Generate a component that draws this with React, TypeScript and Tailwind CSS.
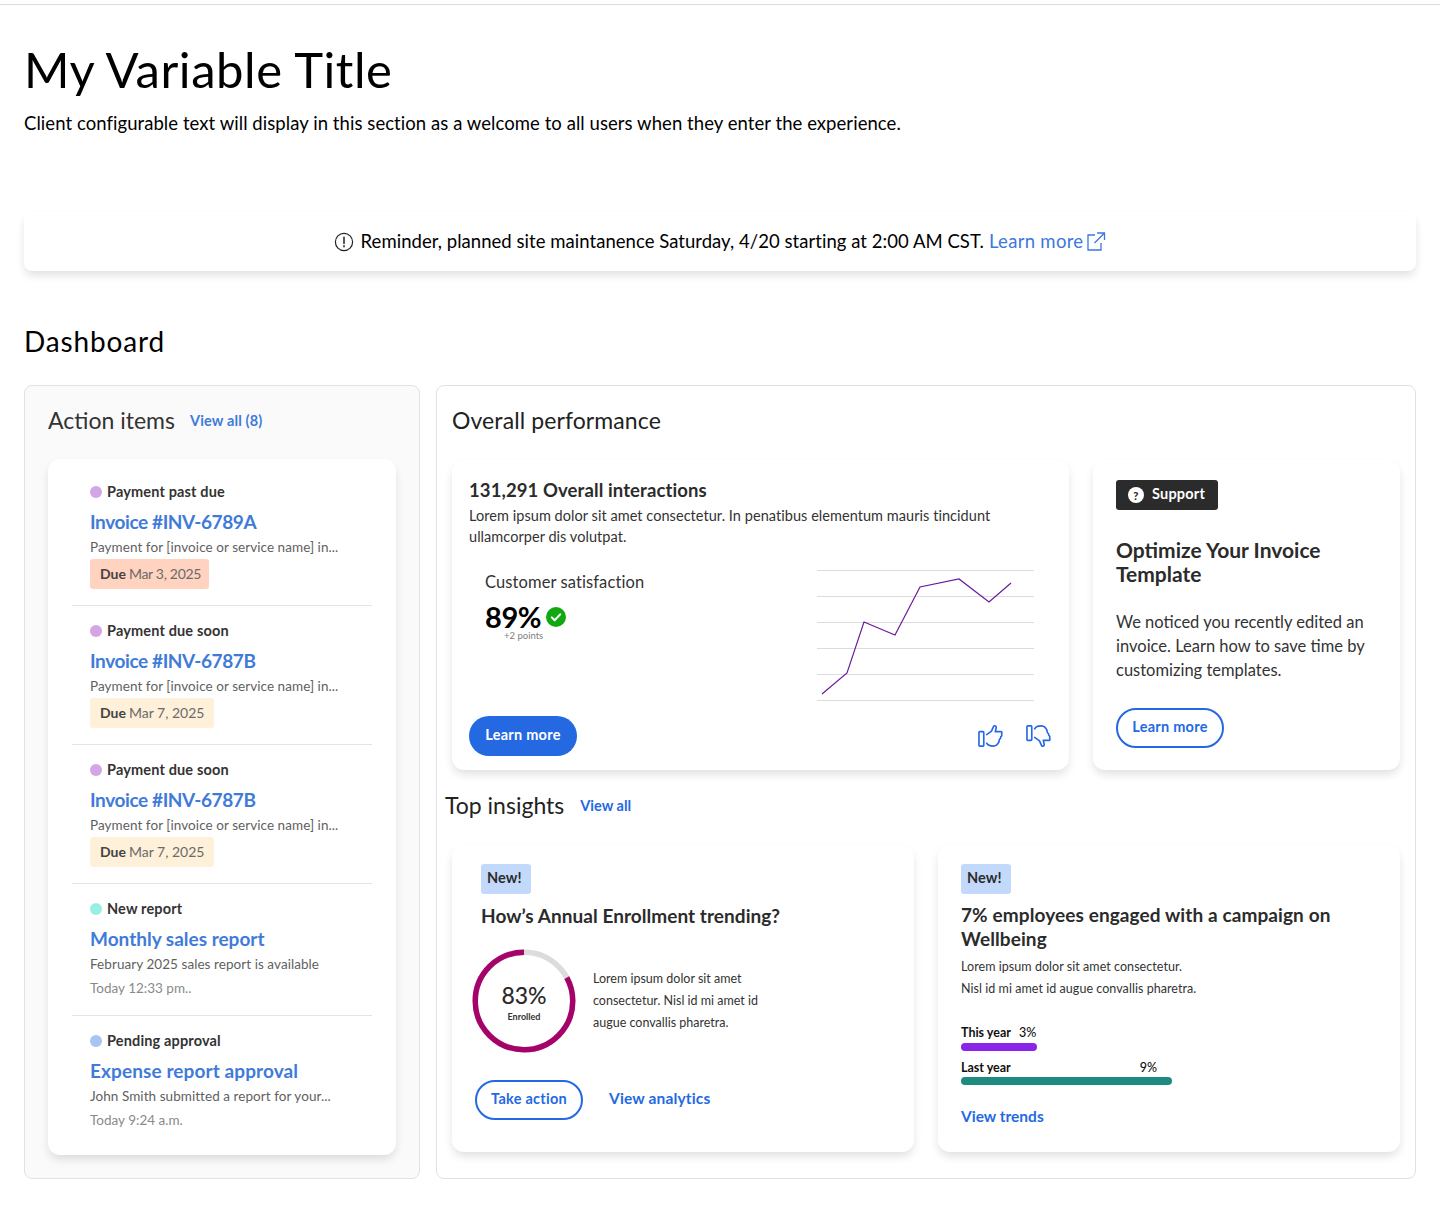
import React from "react";

const F = "font-['Lato','Noto_Sans',sans-serif]";

function Row({ dot, label, title, titleCls, desc, pill, date, last }: { dot: string; label: string; title: string; titleCls: string; desc: string; pill?: { bg: string; text: string; cls: string }; date?: string; last?: boolean }) {
  return (
    <div className={`mx-6 pt-[15px] pl-[18px] ${last ? "" : "border-b border-[#e4e4e4]"} ${pill ? "pb-4" : "pb-[17px]"}`}>
      <div className="flex h-5 items-center gap-[5px]">
        <span className={`h-3 w-3 rounded-full ${dot}`} />
        <span className="-mt-[1px] text-[14.5px] font-bold tracking-[0.15px] text-[#333]">{label}</span>
      </div>
      <div className={`mt-2 h-6 text-[19px] font-bold leading-6 text-[#3f7bd9] ${titleCls}`}>{title}</div>
      <div className="mt-[3px] h-5 text-[13.5px] leading-5 tracking-[0.06px] text-[#5f5f5f]">{desc}</div>
      {pill && (
        <div className={`mt-[2px] flex h-[30px] items-center rounded-[3px] pb-[2px] pl-[10px] text-[14px] text-[#6a6a6a] ${pill.bg} ${pill.cls}`}>
          <span className="mr-[3px] font-bold tracking-normal text-[#444]">Due</span>
          {pill.text}
        </div>
      )}
      {date && <div className="mt-1 h-5 text-[13.5px] leading-5 text-[#8a8a8a]">{date}</div>}
    </div>
  );
}

function Thumb({ down }: { down?: boolean }) {
  return (
    <svg width="25" height="24" viewBox="0 0 26 24" fill="none" stroke="#2469e2" strokeWidth="1.7" strokeLinejoin="round" strokeLinecap="round" className={down ? "rotate-180 -scale-x-100" : ""}>
      <rect x="1" y="7.5" width="5" height="15" rx="0.8" />
      <path d="M9 10.5 L14 7 L16.5 1.5 C17.5 1 19 1.8 19 3.2 L18 7.5 H24 C25 7.5 25.2 9 24.5 10 C25 11 24.6 12.4 23.6 12.8 C23.8 14 23.2 15 22.3 15.4 C22.3 17.5 20.5 22.5 16 22.5 C12.5 22.5 10 21.5 9 19.5" />
    </svg>
  );
}

function Outline({ children }: { children: React.ReactNode }) {
  return <div className="flex h-10 w-[108px] items-center justify-center rounded-full border-2 border-[#2469e2] pb-[2px] text-[14.5px] font-bold tracking-[0.25px] text-[#2469e2]">{children}</div>;
}

function New() {
  return <div className="flex h-[30px] w-[50px] items-center rounded-[3px] bg-[#c3d9fb] pb-[2px] pl-[6px] text-[14.5px] font-bold tracking-[0.1px] text-[#2b2b2b]">New!</div>;
}

const card = "rounded-xl bg-white shadow-[0_5px_10px_-1px_rgba(0,0,0,0.13)]";

export default function App() {
  return (
    <div className={`${F} min-h-[1231px] bg-white text-black`}>
      <div className="h-[5px] border-b border-[#dcdcdc]" />
      <div className="px-6">
        <h1 className="mt-[34px] h-[60px] text-[49px] font-normal leading-[60px] tracking-[0.55px]">My Variable Title</h1>
        <p className="mt-[10px] h-7 text-[18.5px] leading-7 tracking-[0.06px]">Client configurable text will display in this section as a welcome to all users when they enter the experience.</p>

        <div className="mt-[75px] flex h-[59px] items-center justify-center rounded-lg bg-white text-[18.5px] shadow-[0_5px_10px_-1px_rgba(0,0,0,0.13)]">
          <svg width="20" height="20" viewBox="0 0 20 20" fill="none" stroke="#222" strokeWidth="1.2" className="mr-[7px]">
            <circle cx="10" cy="10" r="8.6" />
            <path d="M10 5.2v6.4M10 13.8v1" strokeWidth="1.5" strokeLinecap="round" />
          </svg>
          <span className="tracking-[0.04px]">Reminder, planned site maintanence Saturday, 4/20 starting at 2:00 AM CST.</span>
          <span className="ml-[5px] tracking-[0.3px] text-[#3b78e0]">Learn more</span>
          <svg width="20" height="20" viewBox="0 0 20 20" fill="none" stroke="#3b78e0" strokeWidth="1.3" className="ml-[3px] -translate-y-[1px]">
            <path d="M9 4H2v15h13v-7M11 2h7.5v7M18.5 2 8.5 12" />
          </svg>
        </div>

        <h2 className="mt-[50px] h-10 text-[28px] font-normal leading-10 tracking-[0.85px]">Dashboard</h2>

        <div className="mt-[24px] flex h-[794px] gap-4">
          <section className="w-[396px] shrink-0 rounded-lg border border-[#e2e2e2] bg-[#fafafa] pl-[23px] pr-[23px]">
            <div className="mt-[19px] flex h-8 items-center gap-[15px]">
              <span className="-mt-[2px] text-[23px] text-[#333]">Action items</span>
              <span className="text-[14.5px] font-bold tracking-[0.15px] text-[#3f7bd9]">View all (8)</span>
            </div>
            <div className={`mt-[22px] h-[696px] ${card} pt-[8px]`}>
              <Row dot="bg-[#d3a5e6]" label="Payment past due" title="Invoice #INV-6789A" titleCls="tracking-[-0.4px]" desc="Payment for [invoice or service name] in..." pill={{ bg: "bg-[#ffd3bf]", text: "Mar 3, 2025", cls: "w-[119px] tracking-[-0.3px]" }} />
              <Row dot="bg-[#d3a5e6]" label="Payment due soon" title="Invoice #INV-6787B" titleCls="tracking-[-0.4px]" desc="Payment for [invoice or service name] in..." pill={{ bg: "bg-[#fff0da]", text: "Mar 7, 2025", cls: "w-[124px]" }} />
              <Row dot="bg-[#d3a5e6]" label="Payment due soon" title="Invoice #INV-6787B" titleCls="tracking-[-0.4px]" desc="Payment for [invoice or service name] in..." pill={{ bg: "bg-[#fff0da]", text: "Mar 7, 2025", cls: "w-[124px]" }} />
              <Row dot="bg-[#98f0e4]" label="New report" title="Monthly sales report" titleCls="" desc="February 2025 sales report is available" date="Today 12:33 pm.." />
              <Row dot="bg-[#a8c4f2]" label="Pending approval" title="Expense report approval" titleCls="tracking-[0.1px]" desc="John Smith submitted a report for your..." date="Today 9:24 a.m." last />
            </div>
          </section>

          <section className="flex-1 rounded-lg border border-[#e2e2e2] bg-white px-[15px]">
            <div className="mt-[19px] flex h-8 items-center pb-[2px] text-[23px] tracking-[0.1px] text-[#222]">Overall performance</div>

            <div className="mt-[23px] flex gap-6">
              <div className={`h-[310px] w-[617px] ${card} px-[17px] pt-5`}>
                <div className="h-5 text-[18.5px] font-bold leading-5 tracking-[0.1px] text-[#2b2b2b]">131,291 Overall interactions</div>
                <p className="mt-[5px] text-[14.5px] leading-[21px] tracking-[0.05px] text-[#333]">Lorem ipsum dolor sit amet consectetur. In penatibus elementum mauris tincidunt<br />ullamcorper dis volutpat.</p>
                <div className="mt-[23px] flex h-[131px] justify-between pr-[18px]">
                  <div className="pl-4 pt-[2px]">
                    <div className="h-5 text-[16.5px] leading-5 tracking-[0.1px] text-[#333]">Customer satisfaction</div>
                    <div className="mt-[11px] flex h-7 items-center gap-[5px]">
                      <span className="text-[29px] font-bold leading-7 tracking-[-0.4px]">89%</span>
                      <svg width="20" height="20" viewBox="0 0 20 20">
                        <circle cx="10" cy="10" r="10" fill="#12a812" />
                        <path d="M5.8 10.4l2.8 2.8 5.6-5.8" fill="none" stroke="#fff" strokeWidth="2" strokeLinecap="round" strokeLinejoin="round" />
                      </svg>
                    </div>
                    <div className="ml-[19px] h-[10px] text-[9.5px] leading-[10px] text-[#808080]">+2 points</div>
                  </div>
                  <svg width="217" height="131" viewBox="0 0 217 131" fill="none">
                    {[0.5, 26.5, 52.5, 78.5, 104.5, 130.5].map((y) => (
                      <line key={y} x1="0" x2="217" y1={y} y2={y} stroke="#dcdcdc" />
                    ))}
                    <polyline points="5,124 30,103 47,52 78,65 103,17 142,9 172,32 194,13" stroke="#6a1b9a" strokeWidth="1.2" />
                  </svg>
                </div>
                <div className="mt-[15px] flex items-center justify-between">
                  <div className="flex h-10 w-[108px] items-center justify-center rounded-full bg-[#2469e2] pb-[2px] text-[14.5px] font-bold tracking-[0.25px] text-white">Learn more</div>
                  <div className="mr-[1px] flex gap-[23px]">
                    <Thumb />
                    <Thumb down />
                  </div>
                </div>
              </div>

              <div className={`h-[310px] w-[307px] ${card} pl-[23px] pt-5`}>
                <div className="flex h-[30px] w-[102px] items-center gap-2 rounded-[3px] bg-[#2b2b2b] pb-[2px] pl-3 text-[14.5px] font-bold tracking-[0.2px] text-white">
                  <span className="mt-[2px] flex h-4 w-4 items-center justify-center rounded-full bg-white text-[11px] font-black leading-none text-[#2b2b2b]">?</span>
                  Support
                </div>
                <div className="mt-[28px] w-[260px] text-[21px] font-bold leading-6 text-[#2b2b2b]">Optimize Your Invoice Template</div>
                <p className="mt-[24px] w-[265px] text-[16.5px] leading-6 text-[#333]">We noticed you recently edited an invoice. Learn how to save time by customizing templates.</p>
                <div className="mt-[26px]"><Outline>Learn more</Outline></div>
              </div>
            </div>

            <div className="-ml-[7px] mt-5 flex h-8 items-center gap-4">
              <span className="-mt-[2px] text-[23px] text-[#222]">Top insights</span>
              <span className="text-[14.5px] font-bold text-[#2469e2]">View all</span>
            </div>

            <div className="mt-[23px] flex gap-6">
              <div className={`h-[307px] w-[462px] ${card} pl-[23px] pt-[19px]`}>
                <div className="ml-[6px]"><New /></div>
                <div className="ml-[6px] mt-[10px] h-6 text-[19px] font-bold leading-6 tracking-[0.05px] text-[#2b2b2b]">How’s Annual Enrollment trending?</div>
                <div className="-ml-[3px] mt-[21px] flex items-center">
                  <div className="relative h-[104px] w-[104px]">
                    <svg width="104" height="104" viewBox="0 0 104 104" fill="none" className="-rotate-90">
                      <circle cx="52" cy="52" r="48.75" stroke="#dcdcdc" strokeWidth="5.5" />
                      <circle cx="52" cy="52" r="48.75" stroke="#a6036a" strokeWidth="5.5" strokeDasharray="254.2 306.3" strokeDashoffset="-52.1" />
                    </svg>
                    <div className="absolute inset-0 flex flex-col items-center justify-center pt-[3px]">
                      <span className="text-[23px] font-medium leading-7 text-[#2b2b2b]">83%</span>
                      <span className="text-[9px] font-bold leading-4 text-[#333]">Enrolled</span>
                    </div>
                  </div>
                  <p className="ml-[17px] w-[180px] text-[12.5px] leading-[22px] text-[#333]">Lorem ipsum dolor sit amet<br />consectetur. Nisl id mi amet id<br />augue convallis pharetra.</p>
                </div>
                <div className="mt-[27px] flex items-center">
                  <Outline>Take action</Outline>
                  <span className="-mt-[2px] ml-[26px] text-[15.5px] font-bold tracking-[0.15px] text-[#2469e2]">View analytics</span>
                </div>
              </div>

              <div className={`h-[307px] w-[462px] ${card} pl-[23px] pt-[19px]`}>
                <New />
                <div className="mt-[9px] w-[400px] text-[19px] font-bold leading-6 tracking-[0.1px] text-[#2b2b2b]">7% employees engaged with a campaign on Wellbeing</div>
                <p className="mt-[5px] text-[12.5px] leading-[22px] tracking-[0.05px] text-[#333]">Lorem ipsum dolor sit amet consectetur.<br />Nisl id mi amet id augue convallis pharetra.</p>
                <div className="mt-[25px] flex h-4 items-center text-[12.5px] font-bold leading-4 text-[#111]">
                  <span>This year</span><span className="ml-2 font-medium">3%</span>
                </div>
                <div className="mt-[2px] h-2 w-[76px] rounded-full bg-[#8a24e8]" />
                <div className="mt-[9px] flex h-4 w-[196px] items-center justify-between text-[12.5px] font-bold leading-4 text-[#111]">
                  <span>Last year</span><span className="font-medium">9%</span>
                </div>
                <div className="mt-[1px] h-2 w-[211px] rounded-full bg-[#1f8a80]" />
                <div className="mt-[21px] h-5 text-[15.5px] font-bold leading-5 text-[#2469e2]">View trends</div>
              </div>
            </div>
          </section>
        </div>
      </div>
    </div>
  );
}
